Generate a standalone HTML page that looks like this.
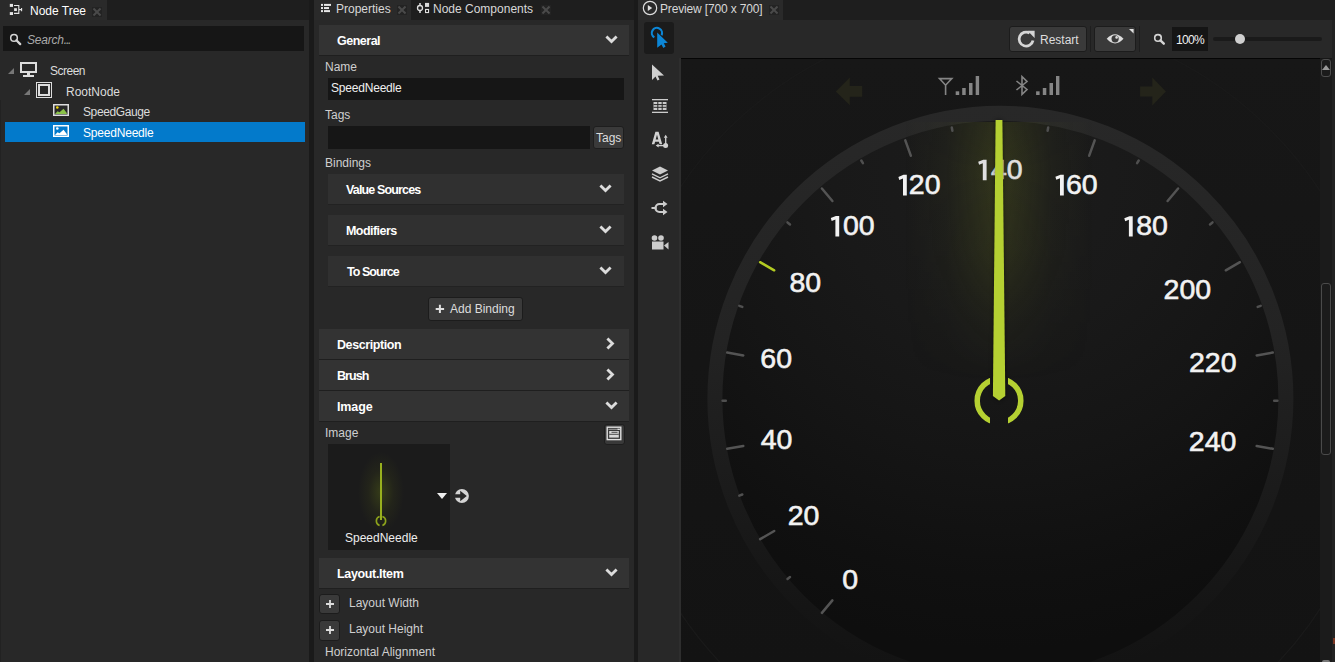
<!DOCTYPE html>
<html><head><meta charset="utf-8">
<style>
*{margin:0;padding:0;box-sizing:border-box}
html,body{width:1335px;height:662px;overflow:hidden;background:#1e1e1e;font-family:"Liberation Sans",sans-serif;color:#dcdcdc;font-size:12px}
.a{position:absolute}
.t{position:absolute;white-space:nowrap;line-height:1}
.panel{position:absolute;background:#282828}
.tab{position:absolute;top:0;height:20px;background:#2a2a2a}
.close{position:absolute;width:10px;height:10px;background:#232323}
.close:before,.close:after{content:"";position:absolute;left:4px;top:0;width:2px;height:10px;background:#4a4a4a;transform:rotate(45deg)}
.close:after{transform:rotate(-45deg)}
.hdr{position:absolute;left:319px;width:310px;height:31px;background:#333333;border-bottom:1px solid #1f1f1f}
.hdr .t{font-weight:bold;color:#fff;font-size:12.5px}
.sub{position:absolute;left:328px;width:296px;height:31px;background:#303030;border-bottom:1px solid #222}
.sub .t{font-weight:bold;color:#fff;font-size:12.5px}
.chev{position:absolute;width:12px;height:8px}
.lbl{position:absolute;white-space:nowrap;line-height:1;color:#cfcfcf;font-size:12px}
.num{position:absolute;white-space:nowrap;line-height:1;color:#f4f4f4;font-size:28.5px}
</style></head><body>

<!-- ============ NODE TREE PANEL ============ -->
<div class="panel" style="left:0;top:20px;width:309px;height:642px;background:#282828"></div>
<div class="tab" style="left:0;width:107px"></div>
<svg class="a" style="left:5px;top:0" width="25" height="20" viewBox="5 0 25 20">
 <rect x="9.8" y="3.9" width="3.2" height="3" fill="#e6e6e6"/><rect x="14.1" y="8.2" width="2.8" height="2.8" fill="#e6e6e6"/><rect x="9.8" y="12.1" width="3.2" height="2.9" fill="#e6e6e6"/>
 <path d="M14 5.5H18.8V13.4H14M18.8 9.6H21.7M21.6 8V11.2" stroke="#e6e6e6" stroke-width="1.1" fill="none"/>
</svg>
<div class="t" style="left:30px;top:5px;color:#fff;font-size:12px">Node Tree</div>
<div class="close" style="left:92px;top:7px"></div>

<div class="a" style="left:3px;top:26px;width:301px;height:25px;background:#161616"></div>
<svg class="a" style="left:8px;top:32px" width="16" height="16" viewBox="8 32 16 16"><circle cx="14" cy="37.9" r="3.3" stroke="#d4d4d4" stroke-width="1.5" fill="none"/><path d="M16.4 40.3L20.2 44.1" stroke="#d4d4d4" stroke-width="2.3" stroke-linecap="round"/></svg>
<div class="t" style="left:27px;top:34px;font-style:italic;color:#aaaaaa;font-size:12px;letter-spacing:-0.2px">Search<span style="letter-spacing:-1.2px">...</span></div>

<!-- tree rows -->
<svg class="a" style="left:8px;top:68px" width="6" height="6"><path d="M6 0V6H0Z" fill="#777"/></svg>
<svg class="a" style="left:20px;top:62px" width="17" height="15" viewBox="0 0 17 15">
 <rect x="1" y="1" width="15" height="9" stroke="#ddd" stroke-width="2" fill="none"/><rect x="7" y="10" width="3" height="3" fill="#ddd"/><rect x="3" y="13" width="11" height="2" fill="#ddd"/>
</svg>
<div class="t" style="left:50px;top:65px;font-size:12px;letter-spacing:-0.5px">Screen</div>

<svg class="a" style="left:24px;top:89px" width="6" height="6"><path d="M6 0V6H0Z" fill="#777"/></svg>
<svg class="a" style="left:36px;top:82px" width="16" height="16" viewBox="0 0 16 16">
 <rect x="0.5" y="0.5" width="15" height="15" stroke="#ddd" stroke-width="1" fill="none"/><rect x="3" y="3" width="10" height="10" stroke="#ddd" stroke-width="2" fill="none"/>
</svg>
<div class="t" style="left:66px;top:86px;font-size:12px">RootNode</div>

<svg class="a" style="left:53px;top:104px" width="16" height="12" viewBox="0 0 16 12">
 <rect x="0.75" y="0.75" width="14.5" height="10.5" stroke="#ddd" stroke-width="1.5" fill="none"/>
 <path d="M2 10L4.5 7.3L6.5 8.3L10.5 4.8L13.8 9V10Z" fill="#8bc34a"/><circle cx="4.3" cy="3.5" r="1.3" fill="#f5d90a"/>
</svg>
<div class="t" style="left:83px;top:106px;font-size:12px;letter-spacing:-0.4px">SpeedGauge</div>

<div class="a" style="left:5px;top:122px;width:300px;height:20px;background:#037acb"></div>
<svg class="a" style="left:53px;top:125px" width="16" height="12" viewBox="0 0 16 12">
 <rect x="0.75" y="0.75" width="14.5" height="10.5" stroke="#fff" stroke-width="1.5" fill="none"/>
 <path d="M2 10L4.5 7.3L6.5 8.3L10.5 4.8L13.8 9V10Z" fill="#fff"/><circle cx="4.3" cy="3.5" r="1.3" fill="#fff"/>
</svg>
<div class="t" style="left:83px;top:127px;color:#fff;font-size:12px;letter-spacing:-0.2px">SpeedNeedle</div>

<div class="a" style="left:0;top:100px;width:1px;height:562px;background:#222"></div>
<!-- separator -->
<div class="a" style="left:309px;top:0;width:5px;height:662px;background:#1a1a1a"></div>

<!-- ============ PROPERTIES PANEL ============ -->
<div class="panel" style="left:314px;top:20px;width:320px;height:642px;background:#282828"></div>
<div class="tab" style="left:314px;width:97px"></div>
<svg class="a" style="left:316px;top:0" width="20" height="16" viewBox="316 0 20 16">
 <rect x="321" y="3.9" width="2" height="2" fill="#e8e8e8"/><rect x="321" y="7.05" width="2" height="2" fill="#e8e8e8"/><rect x="321" y="10.1" width="2" height="2" fill="#e8e8e8"/>
 <rect x="324" y="3.9" width="7" height="2" fill="#e8e8e8"/><rect x="324" y="7.05" width="5" height="2" fill="#e8e8e8"/><rect x="324" y="10.1" width="6" height="2" fill="#e8e8e8"/>
</svg>
<div class="t" style="left:336px;top:3px;color:#d8d8d8;font-size:12px">Properties</div>
<div class="close" style="left:397px;top:5px"></div>
<svg class="a" style="left:412px;top:0" width="20" height="16" viewBox="412 0 20 16">
 <circle cx="420" cy="8" r="2.5" stroke="#e0e0e0" stroke-width="1.3" fill="none"/><path d="M420 2.9V5.4M420 10.6V13.1" stroke="#e0e0e0" stroke-width="1.5"/>
 <rect x="425" y="2.9" width="4.1" height="4" fill="#dadada"/><rect x="425.55" y="9.45" width="3" height="3.1" stroke="#e0e0e0" stroke-width="1.1" fill="none"/>
</svg>
<div class="t" style="left:433px;top:3px;color:#d8d8d8;font-size:12px">Node Components</div>
<div class="close" style="left:541px;top:5px"></div>

<!-- General -->
<div class="hdr" style="top:25px"><div class="t" style="left:18px;top:10px;letter-spacing:-0.5px">General</div></div>
<svg class="a" style="left:604.5px;top:35.4px" width="13" height="9" viewBox="0 0 13 9"><path d="M1.4 1.4L6.5 6.5L11.6 1.4" stroke="#dcdcdc" stroke-width="2.8" fill="none"/></svg>

<div class="lbl" style="left:325px;top:61px">Name</div>
<div class="a" style="left:328px;top:78px;width:296px;height:22px;background:#161616"></div>
<div class="t" style="left:331px;top:82px;color:#f0f0f0;letter-spacing:-0.2px">SpeedNeedle</div>

<div class="lbl" style="left:325px;top:109px">Tags</div>
<div class="a" style="left:328px;top:126px;width:262px;height:23px;background:#161616"></div>
<div class="a" style="left:593px;top:126px;width:31px;height:23px;background:#3a3a3a;border:1px solid #1e1e1e;border-radius:3px"></div>
<div class="t" style="left:596px;top:132px;color:#ddd">Tags</div>

<div class="lbl" style="left:325px;top:157px">Bindings</div>
<div class="sub" style="top:174px"><div class="t" style="left:18px;top:10px;letter-spacing:-0.85px">Value Sources</div></div>
<svg class="a" style="left:599.3px;top:184.3px" width="13" height="9" viewBox="0 0 13 9"><path d="M1.4 1.4L6.5 6.5L11.6 1.4" stroke="#dcdcdc" stroke-width="2.8" fill="none"/></svg>
<div class="sub" style="top:215px"><div class="t" style="left:18px;top:10px;letter-spacing:-0.55px">Modifiers</div></div>
<svg class="a" style="left:599.3px;top:225.3px" width="13" height="9" viewBox="0 0 13 9"><path d="M1.4 1.4L6.5 6.5L11.6 1.4" stroke="#dcdcdc" stroke-width="2.8" fill="none"/></svg>
<div class="sub" style="top:256px"><div class="t" style="left:19px;top:10px;letter-spacing:-0.95px">To Source</div></div>
<svg class="a" style="left:599.3px;top:266.3px" width="13" height="9" viewBox="0 0 13 9"><path d="M1.4 1.4L6.5 6.5L11.6 1.4" stroke="#dcdcdc" stroke-width="2.8" fill="none"/></svg>

<div class="a" style="left:428px;top:297px;width:95px;height:24px;background:#3a3a3a;border:1px solid #1c1c1c;border-radius:3px"></div>
<svg class="a" style="left:435px;top:304px" width="10" height="10" viewBox="435 304 10 10"><path d="M439.9 304.8V313M435.7 308.9H444.1" stroke="#e0e0e0" stroke-width="2"/></svg>
<div class="t" style="left:450px;top:303px;color:#ddd">Add Binding</div>

<div class="hdr" style="top:329px"><div class="t" style="left:18px;top:10px;letter-spacing:-0.42px">Description</div></div>
<svg class="a" style="left:606.4px;top:337.3px" width="9" height="13" viewBox="0 0 9 13"><path d="M1.4 1.4L6.5 6.5L1.4 11.6" stroke="#dcdcdc" stroke-width="2.8" fill="none"/></svg>
<div class="hdr" style="top:360px"><div class="t" style="left:18px;top:10px;letter-spacing:-0.95px">Brush</div></div>
<svg class="a" style="left:606.4px;top:368.3px" width="9" height="13" viewBox="0 0 9 13"><path d="M1.4 1.4L6.5 6.5L1.4 11.6" stroke="#dcdcdc" stroke-width="2.8" fill="none"/></svg>
<div class="hdr" style="top:391px"><div class="t" style="left:18px;top:10px;letter-spacing:-0.12px">Image</div></div>
<svg class="a" style="left:604.5px;top:401.4px" width="13" height="9" viewBox="0 0 13 9"><path d="M1.4 1.4L6.5 6.5L11.6 1.4" stroke="#dcdcdc" stroke-width="2.8" fill="none"/></svg>

<div class="lbl" style="left:325px;top:427px">Image</div>
<div class="a" style="left:604px;top:424px;width:21px;height:21px;background:#393939;border:1px solid #1e1e1e;border-radius:3px"></div>
<svg class="a" style="left:606px;top:426px" width="16" height="15" viewBox="0 0 16 15"><rect x="1.2" y="1.2" width="13.6" height="12.4" stroke="#e0e0e0" stroke-width="1.4" fill="none"/><path d="M2.5 3.3H11" stroke="#bbb" stroke-width="0.8"/><rect x="11.3" y="2.6" width="2.6" height="1.4" fill="#ddd"/><rect x="3.2" y="5" width="9.6" height="6.6" fill="#d8d8d8"/><path d="M3.2 8.3H12.8M5.5 6.3H11.5" stroke="#3a3a3a" stroke-width="0.9"/></svg>

<div class="a" style="left:328px;top:444px;width:122px;height:106px;background:#1b1b1b"></div>
<div class="a" style="left:358px;top:452px;width:46px;height:80px;background:radial-gradient(ellipse 50% 50% at center,rgba(110,130,20,0.32),rgba(90,100,20,0.12) 55%,rgba(0,0,0,0) 100%)"></div>
<div class="a" style="left:379.8px;top:462.5px;width:2px;height:57px;background:#98b01e"></div>
<svg class="a" style="left:374px;top:514px" width="14" height="14" viewBox="0 0 14 14"><path d="M5.6 2.6A4.6 4.6 0 0 0 5.6 11.4M8.4 2.6A4.6 4.6 0 0 1 8.4 11.4" stroke="#8ea41c" stroke-width="1.6" fill="none"/></svg>
<div class="t" style="left:345px;top:532px;color:#eee">SpeedNeedle</div>
<svg class="a" style="left:437px;top:493px" width="10" height="6"><path d="M0 0H10L5 6Z" fill="#eee"/></svg>
<svg class="a" style="left:454px;top:488px" width="17" height="16" viewBox="454 488 17 16"><circle cx="461.9" cy="496" r="7" fill="#d4d4d4"/><path d="M454.5 494.3H460.8V497.8H454.5Z M460.2 490.7L466.8 496L460.2 501.3Z" fill="#282828"/></svg>

<div class="hdr" style="top:558px"><div class="t" style="left:18px;top:10px;letter-spacing:-0.34px">Layout.Item</div></div>
<svg class="a" style="left:604.5px;top:568.4px" width="13" height="9" viewBox="0 0 13 9"><path d="M1.4 1.4L6.5 6.5L11.6 1.4" stroke="#dcdcdc" stroke-width="2.8" fill="none"/></svg>

<div class="a" style="left:319px;top:594px;width:21px;height:20px;background:#3a3a3a;border:1px solid #1c1c1c;border-radius:3px"></div>
<svg class="a" style="left:325px;top:599px" width="10" height="10"><path d="M5 1V9M1 5H9" stroke="#ddd" stroke-width="1.8"/></svg>
<div class="lbl" style="left:349px;top:597px">Layout Width</div>
<div class="a" style="left:319px;top:620px;width:21px;height:21px;background:#3a3a3a;border:1px solid #1c1c1c;border-radius:3px"></div>
<svg class="a" style="left:325px;top:625px" width="10" height="10"><path d="M5 1V9M1 5H9" stroke="#ddd" stroke-width="1.8"/></svg>
<div class="lbl" style="left:349px;top:623px">Layout Height</div>
<div class="lbl" style="left:325px;top:646px">Horizontal Alignment</div>

<!-- separator -->
<div class="a" style="left:634px;top:0;width:4px;height:662px;background:#1a1a1a"></div>

<!-- ============ PREVIEW PANEL ============ -->
<div class="panel" style="left:638px;top:20px;width:697px;height:642px;background:#282828"></div>
<div class="tab" style="left:638px;width:145px"></div>
<svg class="a" style="left:638px;top:0" width="24" height="18" viewBox="638 0 24 18"><circle cx="650" cy="8" r="6.7" stroke="#dedede" stroke-width="1.2" fill="none"/><path d="M647.8 4.9L652.2 8L647.8 11.1Z" fill="#dedede"/></svg>
<div class="t" style="left:660px;top:3px;color:#d8d8d8;letter-spacing:-0.15px">Preview [700 x 700]</div>
<div class="close" style="left:769px;top:5px"></div>

<!-- canvas placeholder -->
<div class="a" style="left:681px;top:58px;width:654px;height:604px;background:#141414"></div>

<!-- tools column -->
<div class="a" style="left:644px;top:22px;width:30px;height:32px;background:#1b1b1b;border-radius:3px"></div>
<svg class="a" style="left:648px;top:24px" width="24" height="26" viewBox="648 24 24 26">
 <path d="M654.35 37.42A5.1 5.1 0 1 1 661.32 35.55" stroke="#0c86d6" stroke-width="2.2" fill="none"/>
 <path d="M657.2 32.4L667.8 42.7L663.8 43.3L665.6 46.6L663.3 47.9L661.5 44.6L657.2 47.8Z" fill="none" stroke="#1b1b1b" stroke-width="1.6"/>
 <path d="M657.2 32.4L667.8 42.7L663.8 43.3L665.6 46.6L663.3 47.9L661.5 44.6L657.2 47.8Z" fill="#0c86d6"/>
</svg>
<svg class="a" style="left:651px;top:64px" width="14" height="17" viewBox="0 0 14 17"><path d="M1 0.5V16L4.5 12.5L6.5 16.5L8.5 15.5L6.7 11.8L13 11.5Z" fill="#cfcfcf"/></svg>
<svg class="a" style="left:652px;top:99px" width="16" height="14" viewBox="0 0 16 14">
 <rect x="0" y="0" width="16" height="1.3" fill="#ccc"/><rect x="0" y="12.7" width="16" height="1.3" fill="#ccc"/>
 <path d="M1.5 3H14.5V11H1.5Z" fill="#ccc"/><path d="M1.5 5.6H14.5M1.5 8.3H14.5M5.8 3V11M10.2 3V11" stroke="#282828" stroke-width="1"/>
</svg>
<svg class="a" style="left:650px;top:130px" width="20" height="20" viewBox="650 130 20 20">
 <path fill-rule="evenodd" d="M651.8 144.2L655.4 131.8H658.6L662.2 144.2H659.6L658.9 141.7H655.1L654.4 144.2ZM655.7 139.5H658.3L657 134.8Z" fill="#d2d2d2"/>
 <path d="M665.7 137.2V145M658 145.6H665" stroke="#d2d2d2" stroke-width="1.3"/>
 <path d="M663.8 137.8H667.6L665.7 134.8ZM658.6 143.7V147.5L655.7 145.6Z" fill="#d2d2d2"/>
 <circle cx="665.6" cy="145.6" r="2.5" fill="#d2d2d2"/>
</svg>
<svg class="a" style="left:651px;top:166px" width="18" height="16" viewBox="0 0 18 16">
 <path d="M9 0.5L17 4.5L9 8.5L1 4.5Z" fill="#ccc"/><path d="M1 7.8L9 11.8L17 7.8M1 11L9 15L17 11" stroke="#ccc" stroke-width="1.4" fill="none"/>
</svg>
<svg class="a" style="left:651px;top:200px" width="18" height="16" viewBox="0 0 18 16">
 <path d="M0.5 8H5.5" stroke="#ccc" stroke-width="2"/><path d="M13 4H8.5A4 4 0 0 0 8.5 12H13" stroke="#ccc" stroke-width="2.2" fill="none"/>
 <path d="M12 0.8L16.5 4L12 7.2ZM12 8.8L16.5 12L12 15.2Z" fill="#ccc"/>
</svg>
<svg class="a" style="left:651px;top:235px" width="18" height="15" viewBox="0 0 18 15">
 <circle cx="3.5" cy="3" r="2.8" fill="#ccc"/><circle cx="10" cy="3" r="2.8" fill="#ccc"/><rect x="1" y="6.5" width="11.5" height="8" fill="#ccc"/><path d="M13 10.5L17.5 7V14.5Z" fill="#ccc"/>
</svg>

<!-- top toolbar -->
<div class="a" style="left:1009px;top:26px;width:78px;height:26px;background:#3a3a3a;border:1px solid #1c1c1c;border-radius:3px"></div>
<svg class="a" style="left:1016px;top:29px" width="20" height="20" viewBox="1016 29 20 20"><path d="M1033 40.5A7 7 0 1 1 1029.6 33" stroke="#d6d6d6" stroke-width="2.8" fill="none"/><path d="M1027.5 30.8H1034.6V37.9Z" fill="#d6d6d6"/></svg>
<div class="t" style="left:1040px;top:34px;color:#ddd">Restart</div>
<div class="a" style="left:1090px;top:26px;width:1px;height:26px;background:#1e1e1e"></div>
<div class="a" style="left:1094px;top:26px;width:42px;height:26px;background:#3a3a3a;border:1px solid #1c1c1c;border-radius:3px"></div>
<svg class="a" style="left:1106px;top:33px" width="18" height="12" viewBox="1106 33 18 12"><path d="M1106.7 38.8Q1115 29.5 1123.5 38.8Q1115 48 1106.7 38.8Z" fill="#dcdcdc"/><circle cx="1115.1" cy="38.8" r="3.6" fill="#3a3a3a"/><circle cx="1116.6" cy="37.4" r="1.3" fill="#dcdcdc"/></svg>
<svg class="a" style="left:1128.5px;top:28.8px" width="5" height="5"><path d="M0 0H4.6V4.4Z" fill="#e0e0e0"/></svg>
<div class="a" style="left:1139px;top:26px;width:1px;height:26px;background:#1e1e1e"></div>
<svg class="a" style="left:1150px;top:30px" width="18" height="18" viewBox="1150 30 18 18"><circle cx="1158" cy="37.9" r="3.3" stroke="#d4d4d4" stroke-width="1.6" fill="none"/><path d="M1160.4 40.3L1163.8 43.7" stroke="#d4d4d4" stroke-width="2.4" stroke-linecap="round"/></svg>
<div class="a" style="left:1172px;top:27px;width:36px;height:24px;background:#151515"></div>
<div class="t" style="left:1176px;top:34px;color:#f0f0f0;letter-spacing:-0.7px">100%</div>
<div class="a" style="left:1213px;top:37px;width:109px;height:4px;background:#1a1a1a;border-radius:2px"></div>
<div class="a" style="left:1235px;top:34px;width:10px;height:10px;background:#cfcfcf;border-radius:50%"></div>

<!-- canvas -->
<svg class="a" style="left:681px;top:58px" width="654" height="604" viewBox="681 58 654 604">
 <defs>
  <linearGradient id="bg" x1="0" y1="58" x2="0" y2="662" gradientUnits="userSpaceOnUse">
   <stop offset="0" stop-color="#171717"/><stop offset="1" stop-color="#131313"/>
  </linearGradient>
  <radialGradient id="face" cx="1000" cy="170" r="480" gradientUnits="userSpaceOnUse">
   <stop offset="0" stop-color="#1c1c1c"/><stop offset="0.35" stop-color="#191919"/><stop offset="0.6" stop-color="#151515"/><stop offset="0.85" stop-color="#101010"/><stop offset="1" stop-color="#0e0e0e"/>
  </radialGradient>
  <linearGradient id="ring" x1="0" y1="106" x2="0" y2="694" gradientUnits="userSpaceOnUse">
   <stop offset="0" stop-color="#282828"/><stop offset="0.4" stop-color="#232323"/><stop offset="0.65" stop-color="#1b1b1b"/><stop offset="0.85" stop-color="#151515"/><stop offset="1" stop-color="#121212"/>
  </linearGradient>
  <linearGradient id="glowh" x1="905" y1="0" x2="1093" y2="0" gradientUnits="userSpaceOnUse">
   <stop offset="0" stop-color="rgb(100,110,30)" stop-opacity="0"/>
   <stop offset="0.22" stop-color="rgb(100,110,30)" stop-opacity="0.07"/>
   <stop offset="0.4" stop-color="rgb(105,115,30)" stop-opacity="0.22"/>
   <stop offset="0.5" stop-color="rgb(110,120,30)" stop-opacity="0.3"/>
   <stop offset="0.6" stop-color="rgb(105,115,30)" stop-opacity="0.22"/>
   <stop offset="0.78" stop-color="rgb(100,110,30)" stop-opacity="0.07"/>
   <stop offset="1" stop-color="rgb(100,110,30)" stop-opacity="0"/>
  </linearGradient>
  <linearGradient id="glowv" x1="0" y1="118" x2="0" y2="380" gradientUnits="userSpaceOnUse">
   <stop offset="0" stop-color="#fff" stop-opacity="0.75"/><stop offset="0.2" stop-color="#fff" stop-opacity="1"/><stop offset="0.5" stop-color="#fff" stop-opacity="0.8"/><stop offset="0.78" stop-color="#fff" stop-opacity="0.25"/><stop offset="1" stop-color="#fff" stop-opacity="0"/>
  </linearGradient>
  <mask id="glowm" maskUnits="userSpaceOnUse" x="681" y="58" width="654" height="604"><rect x="900" y="110" width="200" height="290" fill="url(#glowv)"/></mask>
  <filter id="blur2" x="-50%" y="-10%" width="200%" height="120%"><feGaussianBlur stdDeviation="2"/></filter>
  <clipPath id="pc"><rect x="960" y="360" width="30" height="80"/><rect x="1008" y="360" width="30" height="80"/></clipPath>
 </defs>
 <rect x="681" y="58" width="654" height="604" fill="url(#bg)"/>
 <circle cx="999" cy="400" r="383" stroke="#1a1a1a" stroke-width="1.2" fill="none"/>
 <circle cx="1000.4" cy="398.8" r="280" fill="url(#face)"/>
 <rect x="681" y="58" width="639" height="1" fill="#050505"/>
 <circle cx="1000.4" cy="398.8" r="285.5" stroke="url(#ring)" stroke-width="15" fill="none"/>
 <rect x="905" y="122" width="188" height="278" fill="url(#glowh)" mask="url(#glowm)"/>
 <g stroke-width="2.5" stroke-linecap="round">
 <line x1="832.4" y1="600.4" x2="821.9" y2="612.9" stroke="#545454"/>
 <line x1="790.0" y1="577.0" x2="787.5" y2="579.0" stroke="#4f4f4f"/>
 <line x1="774.2" y1="531.0" x2="760.1" y2="539.2" stroke="#545454"/>
 <line x1="742.3" y1="494.5" x2="739.3" y2="495.6" stroke="#4f4f4f"/>
 <line x1="743.3" y1="446.0" x2="727.2" y2="448.8" stroke="#545454"/>
 <line x1="725.8" y1="400.7" x2="722.6" y2="400.7" stroke="#4f4f4f"/>
 <line x1="743.3" y1="355.4" x2="727.2" y2="352.6" stroke="#545454"/>
 <line x1="742.3" y1="306.9" x2="739.3" y2="305.8" stroke="#4f4f4f"/>
 <line x1="774.2" y1="270.3" x2="760.1" y2="262.2" stroke="#b3cc22"/>
 <line x1="790.0" y1="224.4" x2="787.5" y2="222.4" stroke="#4f4f4f"/>
 <line x1="832.4" y1="201.0" x2="821.9" y2="188.5" stroke="#545454"/>
 <line x1="862.9" y1="163.2" x2="861.3" y2="160.5" stroke="#4f4f4f"/>
 <line x1="910.8" y1="155.7" x2="905.3" y2="140.4" stroke="#545454"/>
 <line x1="952.4" y1="130.7" x2="951.8" y2="127.5" stroke="#4f4f4f"/>
 <line x1="1047.6" y1="130.7" x2="1048.2" y2="127.5" stroke="#4f4f4f"/>
 <line x1="1089.2" y1="155.7" x2="1094.7" y2="140.4" stroke="#545454"/>
 <line x1="1137.1" y1="163.2" x2="1138.7" y2="160.5" stroke="#4f4f4f"/>
 <line x1="1167.6" y1="201.0" x2="1178.1" y2="188.5" stroke="#545454"/>
 <line x1="1210.0" y1="224.4" x2="1212.5" y2="222.4" stroke="#4f4f4f"/>
 <line x1="1225.8" y1="270.3" x2="1239.9" y2="262.2" stroke="#545454"/>
 <line x1="1257.7" y1="306.9" x2="1260.7" y2="305.8" stroke="#4f4f4f"/>
 <line x1="1256.7" y1="355.4" x2="1272.8" y2="352.6" stroke="#545454"/>
 <line x1="1274.2" y1="400.7" x2="1277.4" y2="400.7" stroke="#4f4f4f"/>
 <line x1="1256.7" y1="446.0" x2="1272.8" y2="448.8" stroke="#545454"/>
 </g>
 <g fill="#f2f2f2" stroke="#f2f2f2" stroke-width="0.6" font-family="Liberation Sans, sans-serif" font-size="28.5" text-anchor="middle">
 <text x="850.1" y="589.4">0</text>
 <text x="803.6" y="524.5">20</text>
 <text x="776.6" y="448.5">40</text>
 <text x="776.15" y="367.7">60</text>
 <text x="805.35" y="291.6">80</text>
 <text x="874.6" y="235.4" text-anchor="end">00</text>
 <text x="940.5" y="194.3" text-anchor="end">20</text>
 <text x="1022.7" y="179.0" text-anchor="end" fill="#e0e0e0" stroke="#e0e0e0">40</text>
 <text x="1097.6" y="194.4" text-anchor="end">60</text>
 <text x="1167.9" y="235.4" text-anchor="end">80</text>
 <text x="1187.4" y="299.4">200</text>
 <text x="1212.8" y="371.9">220</text>
 <text x="1212.65" y="451.3">240</text>
 </g>
 <path d="M830.8 218.1L835.9 216.0H839.2V236.6H835.4V219.6L831.7 221.1Z M898.4 176.9L903.5 174.8H906.8V195.5H903.0V178.4L899.3 179.9Z M1055.4 176.8L1060.5 174.7H1063.8V195.6H1060.0V178.3L1056.3 179.8Z M1124.3 218.3L1129.4 216.2H1132.7V236.6H1128.9V219.8L1125.2 221.3Z" fill="#f2f2f2"/>
 <path d="M978.2 161.8L983.3 159.7H986.6V180.2H982.8V163.3L979.1 164.8Z" fill="#e0e0e0"/>
 <!-- top status icons -->
 <g stroke="#858585" fill="none" stroke-width="1.6">
  <path d="M939.5 78.6H951.8L945.6 85.2Z M945.6 85V95"/>
  <path d="M1016.5 81L1027 89.5L1022 94.3V76.7L1027 81.5L1016.5 90"/>
 </g>
 <g fill="#858585">
  <rect x="955.7" y="91.3" width="3.5" height="3.7"/><rect x="962.2" y="88" width="3.5" height="7"/><rect x="969" y="83" width="3.5" height="12"/><rect x="975.7" y="76" width="3.4" height="19"/>
  <rect x="1036.1" y="91.3" width="3.5" height="3.7"/><rect x="1042.8" y="88" width="3.5" height="7"/><rect x="1049.5" y="83" width="3.5" height="12"/><rect x="1056" y="76" width="3.4" height="19"/>
 </g>
 <path d="M835.8 91.6L849.8 77.6V85.9H862.2V96.7H849.8V105.2Z" fill="#24241a"/>
 <path d="M1165.9 91.6L1152.3 77.6V86.5H1140.1V96.6H1152.3V105.5Z" fill="#24241a"/>
 <!-- needle -->
 <path d="M995.7 120H1002.2L1005.3 396L999 400.5L992.9 396Z" fill="#000" opacity="0.55" filter="url(#blur2)"/>
 <path d="M995.6 120H1002.4L1005.3 396L999.1 400.5L992.9 396Z" fill="#b5d032"/>
 <circle cx="999" cy="400.7" r="21.8" stroke="#b5d032" stroke-width="5.5" fill="none" clip-path="url(#pc)"/>
</svg>
<div class="a" style="left:679px;top:58px;width:2px;height:604px;background:#2e2e2e"></div>
<!-- scrollbar -->
<div class="a" style="left:1319.5px;top:59px;width:12px;height:603px;background:#1b1b1b"></div>
<div class="a" style="left:1332px;top:20px;width:3px;height:642px;background:#222"></div>
<div class="a" style="left:1321px;top:59px;width:10px;height:18px;border:1px solid #4d4d4d;border-radius:3px"></div>
<svg class="a" style="left:1322px;top:65px" width="8" height="5"><path d="M0 5L4 0L8 5Z" fill="#999"/></svg>
<div class="a" style="left:1321px;top:283px;width:10px;height:172px;border:1px solid #4a4a4a;border-radius:3px"></div>
<div class="a" style="left:1333px;top:638px;width:2px;height:6px;background:#7a3622"></div>
<div class="a" style="left:1322px;top:660px;width:8px;height:2px;background:#777;border-radius:2px 2px 0 0"></div>


</body></html>
